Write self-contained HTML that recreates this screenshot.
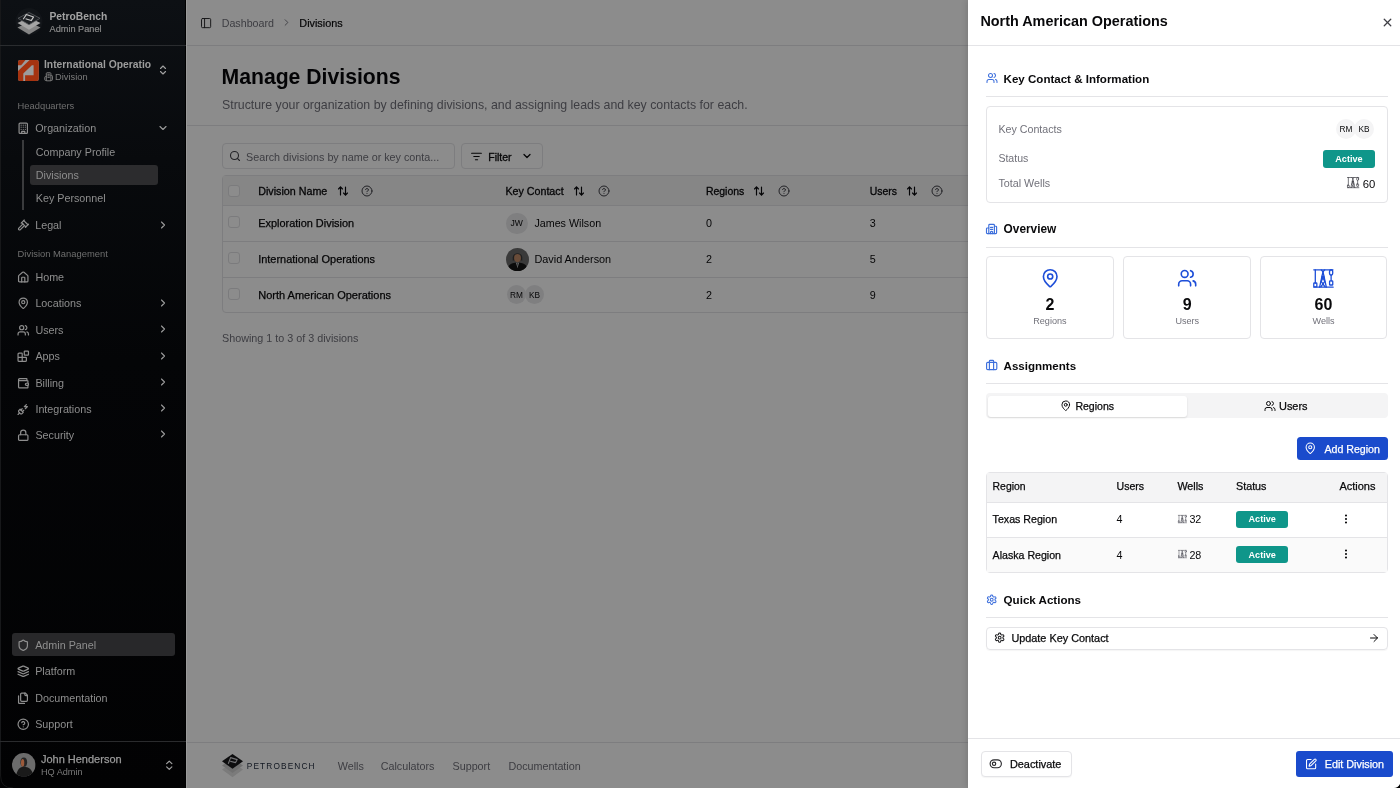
<!DOCTYPE html>
<html><head><meta charset="utf-8"><style>
html,body{margin:0;padding:0;width:1400px;height:788px;overflow:hidden;background:#fff}
body{position:relative;font-family:"Liberation Sans",sans-serif}
.t{position:absolute;white-space:nowrap;line-height:1;font-family:"Liberation Sans",sans-serif}
.av{position:absolute;border-radius:50%;background:#e8e8ea;color:#09090b;display:flex;align-items:center;justify-content:center;font-family:"Liberation Sans",sans-serif}
.badge{position:absolute;background:#0f968a;color:#fff;border-radius:3px;font-size:9.1px;font-weight:bold;display:flex;align-items:center;justify-content:center;font-family:"Liberation Sans",sans-serif}
svg{overflow:visible}
</style></head><body>
<div id="root" style="position:absolute;left:0;top:0;width:1400px;height:788px;will-change:transform"><div style="position:absolute;left:0;top:0;width:186px;height:788px;background:linear-gradient(#0d1014 0px,#080a0d 160px,#040507 360px,#020203 788px)"></div>
<div style="position:absolute;left:186px;top:0px;width:1px;height:788px;background:#9a9a9a"></div>
<div style="position:absolute;left:0px;top:0px;width:1px;height:776px;background:#17181a"></div>
<svg style="position:absolute;left:0;top:770px" width="20" height="18" viewBox="0 770 20 18"><path d="M0.6 770 V776 Q0.6 788 13 788" fill="none" stroke="#151617" stroke-width="1"/></svg>
<div style="position:absolute;left:185px;top:0px;width:1px;height:788px;background:#000"></div>
<div style="position:absolute;left:0px;top:45px;width:186px;height:1px;background:#2a2c2f"></div>
<div style="position:absolute;left:0px;top:741px;width:186px;height:1px;background:#2a2b2d"></div>
<svg style="position:absolute;left:15px;top:7px" width="28" height="30" viewBox="15 7 28 30">
<circle cx="29" cy="21.5" r="13.5" fill="#121519"/>
<path d="M29 22 L40.5 27.5 L29 34.5 L17.5 27.5 Z" fill="#858585"/>
<path d="M29 17.5 L40.5 23 L29 29.8 L17.5 23 Z" fill="#a5a5a5"/>
<path d="M29 12.5 L40 18.3 L29 24.8 L18 18.3 Z" fill="#1c1f23" stroke="#5a5d61" stroke-width="0.8"/>
<path d="M23.2 19.3 L26.3 14.6 L33.6 16.9 L31.2 20.6 L25.6 18.8" fill="none" stroke="#c9c9c9" stroke-width="1.1" stroke-linejoin="round"/>
</svg>
<div class="t" style="left:49.50px;top:12.00px;font-size:10.3px;color:#a2a2a2;font-weight:bold;">PetroBench</div>
<div class="t" style="left:49.50px;top:25.00px;font-size:9.2px;color:#8a8a8a;-webkit-text-stroke:0.2px #8a8a8a;">Admin Panel</div>
<svg style="position:absolute;left:17.5px;top:59.5px" width="20.8" height="21" viewBox="0 0 20.8 21">
<rect x="0" y="0" width="20.8" height="21" rx="2.2" fill="#9c9c9c"/>
<path d="M2 0 H7.5 L3.2 5.3 H0 V2 Q0 0 2 0Z" fill="#a53310"/>
<path d="M11.6 0 H18.6 Q20.8 0 20.8 2.2 V18.8 Q20.8 21 18.6 21 H2 Q0 21 0 19 V11 Z" fill="#a53310"/>
<path d="M13.9 5.3 H15.6 V15.3 H7.1 V21 H5.3 V13.5 Z" fill="#9c9c9c"/>
</svg>
<div class="t" style="left:44.00px;top:60.00px;font-size:10.32px;color:#9c9c9c;font-weight:bold;">International Operatio</div>
<svg style="position:absolute;left:43.8px;top:72.3px;" width="9.2" height="9.2" viewBox="0 0 24 24" fill="none" stroke="#7a7a7a" stroke-width="2.6" stroke-linecap="round" stroke-linejoin="round"><path d="M6 22V4a2 2 0 0 1 2-2h8a2 2 0 0 1 2 2v18Z"/><path d="M6 12H4a2 2 0 0 0-2 2v6a2 2 0 0 0 2 2h2"/><path d="M18 9h2a2 2 0 0 1 2 2v9a2 2 0 0 1-2 2h-2"/><path d="M10 6h4"/><path d="M10 10h4"/><path d="M10 14h4"/></svg>
<div class="t" style="left:55.00px;top:73.00px;font-size:9.3px;color:#7d7d7d;">Division</div>
<svg style="position:absolute;left:157px;top:64px;" width="12" height="12" viewBox="0 0 24 24" fill="none" stroke="#a0a0a0" stroke-width="2.3" stroke-linecap="round" stroke-linejoin="round"><path d="m7 15 5 5 5-5"/><path d="m7 9 5-5 5 5"/></svg>
<div class="t" style="left:17.60px;top:102.00px;font-size:9.35px;color:#6f6f6f;">Headquarters</div>
<svg style="position:absolute;left:16.5px;top:122px;" width="12.5" height="12.5" viewBox="0 0 24 24" fill="none" stroke="#8e8e8e" stroke-width="2.3" stroke-linecap="round" stroke-linejoin="round"><rect width="16" height="20" x="4" y="2" rx="2" ry="2"/><path d="M9 22v-4h6v4"/><path d="M8 6h.01"/><path d="M16 6h.01"/><path d="M12 6h.01"/><path d="M12 10h.01"/><path d="M12 14h.01"/><path d="M16 10h.01"/><path d="M16 14h.01"/><path d="M8 10h.01"/><path d="M8 14h.01"/></svg>
<div class="t" style="left:35.20px;top:123.00px;font-size:10.76px;color:#8e8e8e;">Organization</div>
<svg style="position:absolute;left:157px;top:122px;" width="12" height="12" viewBox="0 0 24 24" fill="none" stroke="#9a9a9a" stroke-width="2.3" stroke-linecap="round" stroke-linejoin="round"><path d="m6 9 6 6 6-6"/></svg>
<div style="position:absolute;left:22px;top:140px;width:1.6px;height:70px;background:#3a3b3d"></div>
<div class="t" style="left:35.80px;top:147.00px;font-size:10.74px;color:#8e8e8e;">Company Profile</div>
<div style="position:absolute;left:30px;top:165px;width:128px;height:20px;background:#2c2c2e;border-radius:3px"></div>
<div class="t" style="left:35.80px;top:170.00px;font-size:10.74px;color:#8e8e8e;">Divisions</div>
<div class="t" style="left:35.80px;top:193.00px;font-size:10.74px;color:#8e8e8e;">Key Personnel</div>
<svg style="position:absolute;left:16.5px;top:218.5px;" width="12.5" height="12.5" viewBox="0 0 24 24" fill="none" stroke="#8e8e8e" stroke-width="2.3" stroke-linecap="round" stroke-linejoin="round"><path d="m14.5 12.5-8 8a2.119 2.119 0 1 1-3-3l8-8"/><path d="m16 16 6-6"/><path d="m8 8 6-6"/><path d="m9 7 8 8"/><path d="m21 11-8-8"/></svg>
<div class="t" style="left:35.20px;top:220.00px;font-size:10.76px;color:#8e8e8e;">Legal</div>
<svg style="position:absolute;left:157px;top:219px;" width="12" height="12" viewBox="0 0 24 24" fill="none" stroke="#9a9a9a" stroke-width="2.3" stroke-linecap="round" stroke-linejoin="round"><path d="m9 18 6-6-6-6"/></svg>
<div class="t" style="left:17.60px;top:249.00px;font-size:9.39px;color:#6f6f6f;">Division Management</div>
<svg style="position:absolute;left:16.5px;top:271.3px;" width="12.5" height="12.5" viewBox="0 0 24 24" fill="none" stroke="#8e8e8e" stroke-width="2.3" stroke-linecap="round" stroke-linejoin="round"><path d="M15 21v-8a1 1 0 0 0-1-1h-4a1 1 0 0 0-1 1v8"/><path d="M3 10a2 2 0 0 1 .709-1.528l7-5.999a2 2 0 0 1 2.582 0l7 5.999A2 2 0 0 1 21 10v9a2 2 0 0 1-2 2H5a2 2 0 0 1-2-2z"/></svg>
<div class="t" style="left:35.40px;top:272.00px;font-size:10.75px;color:#8e8e8e;">Home</div>
<svg style="position:absolute;left:16.5px;top:297.4px;" width="12.5" height="12.5" viewBox="0 0 24 24" fill="none" stroke="#8e8e8e" stroke-width="2.3" stroke-linecap="round" stroke-linejoin="round"><path d="M20 10c0 4.993-5.539 10.193-7.399 11.799a1 1 0 0 1-1.202 0C9.539 20.193 4 14.993 4 10a8 8 0 0 1 16 0"/><circle cx="12" cy="10" r="3"/></svg>
<div class="t" style="left:35.40px;top:298.00px;font-size:10.75px;color:#8e8e8e;">Locations</div>
<svg style="position:absolute;left:157px;top:296.9px;" width="12" height="12" viewBox="0 0 24 24" fill="none" stroke="#9a9a9a" stroke-width="2.3" stroke-linecap="round" stroke-linejoin="round"><path d="m9 18 6-6-6-6"/></svg>
<svg style="position:absolute;left:16.5px;top:323.8px;" width="12.5" height="12.5" viewBox="0 0 24 24" fill="none" stroke="#8e8e8e" stroke-width="2.3" stroke-linecap="round" stroke-linejoin="round"><path d="M16 21v-2a4 4 0 0 0-4-4H6a4 4 0 0 0-4 4v2"/><circle cx="9" cy="7" r="4"/><path d="M22 21v-2a4 4 0 0 0-3-3.87"/><path d="M16 3.13a4 4 0 0 1 0 7.75"/></svg>
<div class="t" style="left:35.40px;top:325.00px;font-size:10.75px;color:#8e8e8e;">Users</div>
<svg style="position:absolute;left:157px;top:323.3px;" width="12" height="12" viewBox="0 0 24 24" fill="none" stroke="#9a9a9a" stroke-width="2.3" stroke-linecap="round" stroke-linejoin="round"><path d="m9 18 6-6-6-6"/></svg>
<svg style="position:absolute;left:16.5px;top:350px;" width="12.5" height="12.5" viewBox="0 0 24 24" fill="none" stroke="#8e8e8e" stroke-width="2.3" stroke-linecap="round" stroke-linejoin="round"><path d="M10 22V7a1 1 0 0 0-1-1H4a2 2 0 0 0-2 2v12a2 2 0 0 0 2 2h12a2 2 0 0 0 2-2v-5a1 1 0 0 0-1-1H2"/><rect x="14" y="2" width="8" height="8" rx="1"/></svg>
<div class="t" style="left:35.40px;top:351.00px;font-size:10.75px;color:#8e8e8e;">Apps</div>
<svg style="position:absolute;left:157px;top:349.5px;" width="12" height="12" viewBox="0 0 24 24" fill="none" stroke="#9a9a9a" stroke-width="2.3" stroke-linecap="round" stroke-linejoin="round"><path d="m9 18 6-6-6-6"/></svg>
<svg style="position:absolute;left:16.5px;top:376.5px;" width="12.5" height="12.5" viewBox="0 0 24 24" fill="none" stroke="#8e8e8e" stroke-width="2.3" stroke-linecap="round" stroke-linejoin="round"><path d="M19 7V4a1 1 0 0 0-1-1H5a2 2 0 0 0 0 4h15a1 1 0 0 1 1 1v4h-3a2 2 0 0 0 0 4h3a1 1 0 0 0 1-1v-2a1 1 0 0 0-1-1"/><path d="M3 5v14a2 2 0 0 0 2 2h15a1 1 0 0 0 1-1v-4"/></svg>
<div class="t" style="left:35.40px;top:378.00px;font-size:10.75px;color:#8e8e8e;">Billing</div>
<svg style="position:absolute;left:157px;top:376.0px;" width="12" height="12" viewBox="0 0 24 24" fill="none" stroke="#9a9a9a" stroke-width="2.3" stroke-linecap="round" stroke-linejoin="round"><path d="m9 18 6-6-6-6"/></svg>
<svg style="position:absolute;left:16.5px;top:402.7px;" width="12.5" height="12.5" viewBox="0 0 24 24" fill="none" stroke="#8e8e8e" stroke-width="2.3" stroke-linecap="round" stroke-linejoin="round"><path d="M6.3 20.3a2.4 2.4 0 0 0 3.4 0L12 18l-6-6-2.3 2.3a2.4 2.4 0 0 0 0 3.4Z"/><path d="m2 22 3-3"/><path d="M7.5 13.5 10 11"/><path d="M10.5 16.5 13 14"/><path d="m18 3-4 4h6l-4 4"/></svg>
<div class="t" style="left:35.40px;top:404.00px;font-size:10.75px;color:#8e8e8e;">Integrations</div>
<svg style="position:absolute;left:157px;top:402.2px;" width="12" height="12" viewBox="0 0 24 24" fill="none" stroke="#9a9a9a" stroke-width="2.3" stroke-linecap="round" stroke-linejoin="round"><path d="m9 18 6-6-6-6"/></svg>
<svg style="position:absolute;left:16.5px;top:428.5px;" width="12.5" height="12.5" viewBox="0 0 24 24" fill="none" stroke="#8e8e8e" stroke-width="2.3" stroke-linecap="round" stroke-linejoin="round"><rect width="18" height="11" x="3" y="11" rx="2" ry="2"/><path d="M7 11V7a5 5 0 0 1 10 0v4"/></svg>
<div class="t" style="left:35.40px;top:430.00px;font-size:10.75px;color:#8e8e8e;">Security</div>
<svg style="position:absolute;left:157px;top:428.0px;" width="12" height="12" viewBox="0 0 24 24" fill="none" stroke="#9a9a9a" stroke-width="2.3" stroke-linecap="round" stroke-linejoin="round"><path d="m9 18 6-6-6-6"/></svg>
<div style="position:absolute;left:12px;top:633px;width:163px;height:23px;background:#28282a;border-radius:3px"></div>
<svg style="position:absolute;left:16.5px;top:638.8px;" width="12.5" height="12.5" viewBox="0 0 24 24" fill="none" stroke="#8e8e8e" stroke-width="2.3" stroke-linecap="round" stroke-linejoin="round"><path d="M20 13c0 5-3.5 7.5-7.66 8.95a1 1 0 0 1-.67-.01C7.5 20.5 4 18 4 13V6a1 1 0 0 1 1-1c2 0 4.5-1.2 6.24-2.72a1.17 1.17 0 0 1 1.52 0C14.51 3.81 17 5 19 5a1 1 0 0 1 1 1z"/></svg>
<div class="t" style="left:35.20px;top:640.00px;font-size:10.75px;color:#8e8e8e;">Admin Panel</div>
<svg style="position:absolute;left:16.5px;top:665px;" width="12.5" height="12.5" viewBox="0 0 24 24" fill="none" stroke="#8e8e8e" stroke-width="2.3" stroke-linecap="round" stroke-linejoin="round"><path d="M12.83 2.18a2 2 0 0 0-1.66 0L2.6 6.08a1 1 0 0 0 0 1.83l8.58 3.91a2 2 0 0 0 1.66 0l8.58-3.9a1 1 0 0 0 0-1.83Z"/><path d="m22 17.65-9.17 4.16a2 2 0 0 1-1.66 0L2 17.65"/><path d="m22 12.65-9.17 4.16a2 2 0 0 1-1.66 0L2 12.65"/></svg>
<div class="t" style="left:35.20px;top:666.00px;font-size:10.75px;color:#8e8e8e;">Platform</div>
<svg style="position:absolute;left:16.5px;top:691.5px;" width="12.5" height="12.5" viewBox="0 0 24 24" fill="none" stroke="#8e8e8e" stroke-width="2.3" stroke-linecap="round" stroke-linejoin="round"><path d="M20 7h-3a2 2 0 0 1-2-2V2"/><path d="M9 18a2 2 0 0 1-2-2V4a2 2 0 0 1 2-2h7l4 4v10a2 2 0 0 1-2 2Z"/><path d="M3 7.6v12.8A1.6 1.6 0 0 0 4.6 22h9.8"/></svg>
<div class="t" style="left:35.20px;top:693.00px;font-size:10.75px;color:#8e8e8e;">Documentation</div>
<svg style="position:absolute;left:16.5px;top:717.7px;" width="12.5" height="12.5" viewBox="0 0 24 24" fill="none" stroke="#8e8e8e" stroke-width="2.3" stroke-linecap="round" stroke-linejoin="round"><circle cx="12" cy="12" r="10"/><path d="M9.09 9a3 3 0 0 1 5.83 1c0 2-3 3-3 3"/><path d="M12 17h.01"/></svg>
<div class="t" style="left:35.20px;top:719.00px;font-size:10.75px;color:#8e8e8e;">Support</div>
<svg style="position:absolute;left:11.8px;top:753px" width="23.6" height="23.6" viewBox="0 0 24 24">
<defs><clipPath id="cu"><circle cx="12" cy="12" r="12"/></clipPath></defs>
<g clip-path="url(#cu)"><rect width="24" height="24" fill="#6c6c6c"/>
<ellipse cx="12" cy="9.3" rx="3.4" ry="4.8" fill="#262626"/><ellipse cx="10.8" cy="10" rx="1.7" ry="3.9" fill="#9c5a3a"/>
<path d="M4 24 C5 17 8 14 12 14 C17 14 21 17 22 24Z" fill="#1a1a1a"/></g></svg>
<div class="t" style="left:40.90px;top:754.00px;font-size:11.0px;color:#9a9a9a;-webkit-text-stroke:0.25px #9a9a9a;">John Henderson</div>
<div class="t" style="left:40.90px;top:768.00px;font-size:9.17px;color:#7a7a7a;">HQ Admin</div>
<svg style="position:absolute;left:163px;top:758.8px;" width="12.5" height="12.5" viewBox="0 0 24 24" fill="none" stroke="#a0a0a0" stroke-width="2.3" stroke-linecap="round" stroke-linejoin="round"><path d="m7 15 5 5 5-5"/><path d="m7 9 5-5 5 5"/></svg>
<div style="position:absolute;left:187px;top:0;width:781px;height:788px;background:#fff;overflow:hidden">
<div style="position:absolute;left:-187px;top:0;width:1400px;height:788px">
<div style="position:absolute;left:187px;top:45px;width:781px;height:1px;background:#e4e4e7"></div>
<svg style="position:absolute;left:199.6px;top:16.8px;" width="12.2" height="12.2" viewBox="0 0 24 24" fill="none" stroke="#27272a" stroke-width="1.9" stroke-linecap="round" stroke-linejoin="round"><rect width="18" height="18" x="3" y="3" rx="2"/><path d="M9 3v18"/></svg>
<div class="t" style="left:221.70px;top:18.00px;font-size:10.69px;color:#71717a;">Dashboard</div>
<svg style="position:absolute;left:281px;top:17px;" width="11" height="11" viewBox="0 0 24 24" fill="none" stroke="#71717a" stroke-width="2" stroke-linecap="round" stroke-linejoin="round"><path d="m9 18 6-6-6-6"/></svg>
<div class="t" style="left:299.30px;top:18.00px;font-size:10.85px;color:#09090b;-webkit-text-stroke:0.2px #09090b;">Divisions</div>
<div class="t" style="left:221.50px;top:66.00px;font-size:21.2px;color:#09090b;font-weight:bold;">Manage Divisions</div>
<div class="t" style="left:222.00px;top:99.00px;font-size:12.35px;color:#71717a;">Structure your organization by defining divisions, and assigning leads and key contacts for each.</div>
<div style="position:absolute;left:187px;top:125px;width:781px;height:1px;background:#e4e4e7"></div>
<div style="position:absolute;left:222px;top:143px;width:233px;height:26px;box-sizing:border-box;border:1px solid #e4e4e7;border-radius:4px;background:#fff"></div>
<svg style="position:absolute;left:228.6px;top:150.3px;" width="12" height="12" viewBox="0 0 24 24" fill="none" stroke="#3f3f46" stroke-width="2.2" stroke-linecap="round" stroke-linejoin="round"><circle cx="11" cy="11" r="8"/><path d="m21 21-4.3-4.3"/></svg>
<div class="t" style="left:246.00px;top:152.00px;font-size:10.78px;color:#71717a;">Search divisions by name or key conta...</div>
<div style="position:absolute;left:461px;top:143px;width:81.5px;height:26px;box-sizing:border-box;border:1px solid #e4e4e7;border-radius:4px;background:#fff"></div>
<svg style="position:absolute;left:469.5px;top:149.5px;" width="13" height="13" viewBox="0 0 24 24" fill="none" stroke="#09090b" stroke-width="2" stroke-linecap="round" stroke-linejoin="round"><path d="M3 6h18"/><path d="M7 12h10"/><path d="M10 18h4"/></svg>
<div class="t" style="left:488.20px;top:152.00px;font-size:10.55px;color:#09090b;-webkit-text-stroke:0.3px #09090b;">Filter</div>
<svg style="position:absolute;left:521.2px;top:150.3px;" width="12" height="12" viewBox="0 0 24 24" fill="none" stroke="#09090b" stroke-width="2.5" stroke-linecap="round" stroke-linejoin="round"><path d="m6 9 6 6 6-6"/></svg>
<div style="position:absolute;left:222px;top:175px;width:760px;height:138px;box-sizing:border-box;border:1px solid #e4e4e7;border-radius:4px;background:#fff"></div>
<div style="position:absolute;left:223px;top:176px;width:758px;height:29px;background:#f4f4f5"></div>
<div style="position:absolute;left:222px;top:205px;width:760px;height:1px;background:#e4e4e7"></div>
<div style="position:absolute;left:222px;top:241px;width:760px;height:1px;background:#e4e4e7"></div>
<div style="position:absolute;left:222px;top:277px;width:760px;height:1px;background:#e4e4e7"></div>
<div style="position:absolute;left:228.3px;top:185px;width:11.3px;height:11.5px;box-sizing:border-box;border:1px solid #e0e0e3;border-radius:3px;background:#fff"></div>
<div style="position:absolute;left:228.3px;top:216.4px;width:11.3px;height:11.5px;box-sizing:border-box;border:1px solid #e0e0e3;border-radius:3px;background:#fff"></div>
<div style="position:absolute;left:228.3px;top:252.2px;width:11.3px;height:11.5px;box-sizing:border-box;border:1px solid #e0e0e3;border-radius:3px;background:#fff"></div>
<div style="position:absolute;left:228.3px;top:288.2px;width:11.3px;height:11.5px;box-sizing:border-box;border:1px solid #e0e0e3;border-radius:3px;background:#fff"></div>
<div class="t" style="left:258.20px;top:186.00px;font-size:10.73px;color:#09090b;-webkit-text-stroke:0.3px #09090b;">Division Name</div>
<svg style="position:absolute;left:336.5px;top:184.5px;" width="12" height="12" viewBox="0 0 24 24" fill="none" stroke="#09090b" stroke-width="2.3" stroke-linecap="round" stroke-linejoin="round"><path d="m21 16-4 4-4-4"/><path d="M17 20V4"/><path d="m3 8 4-4 4 4"/><path d="M7 4v16"/></svg>
<svg style="position:absolute;left:361px;top:184.5px;" width="12" height="12" viewBox="0 0 24 24" fill="none" stroke="#3f3f46" stroke-width="2" stroke-linecap="round" stroke-linejoin="round"><circle cx="12" cy="12" r="10"/><path d="M9.09 9a3 3 0 0 1 5.83 1c0 2-3 3-3 3"/><path d="M12 17h.01"/></svg>
<div class="t" style="left:505.40px;top:186.00px;font-size:10.7px;color:#09090b;-webkit-text-stroke:0.3px #09090b;">Key Contact</div>
<svg style="position:absolute;left:573px;top:184.5px;" width="12" height="12" viewBox="0 0 24 24" fill="none" stroke="#09090b" stroke-width="2.3" stroke-linecap="round" stroke-linejoin="round"><path d="m21 16-4 4-4-4"/><path d="M17 20V4"/><path d="m3 8 4-4 4 4"/><path d="M7 4v16"/></svg>
<svg style="position:absolute;left:597.5px;top:184.5px;" width="12" height="12" viewBox="0 0 24 24" fill="none" stroke="#3f3f46" stroke-width="2" stroke-linecap="round" stroke-linejoin="round"><circle cx="12" cy="12" r="10"/><path d="M9.09 9a3 3 0 0 1 5.83 1c0 2-3 3-3 3"/><path d="M12 17h.01"/></svg>
<div class="t" style="left:705.90px;top:187.00px;font-size:10.47px;color:#09090b;-webkit-text-stroke:0.3px #09090b;">Regions</div>
<svg style="position:absolute;left:753px;top:184.5px;" width="12" height="12" viewBox="0 0 24 24" fill="none" stroke="#09090b" stroke-width="2.3" stroke-linecap="round" stroke-linejoin="round"><path d="m21 16-4 4-4-4"/><path d="M17 20V4"/><path d="m3 8 4-4 4 4"/><path d="M7 4v16"/></svg>
<svg style="position:absolute;left:777.5px;top:184.5px;" width="12" height="12" viewBox="0 0 24 24" fill="none" stroke="#3f3f46" stroke-width="2" stroke-linecap="round" stroke-linejoin="round"><circle cx="12" cy="12" r="10"/><path d="M9.09 9a3 3 0 0 1 5.83 1c0 2-3 3-3 3"/><path d="M12 17h.01"/></svg>
<div class="t" style="left:869.70px;top:187.00px;font-size:10.45px;color:#09090b;-webkit-text-stroke:0.3px #09090b;">Users</div>
<svg style="position:absolute;left:906px;top:184.5px;" width="12" height="12" viewBox="0 0 24 24" fill="none" stroke="#09090b" stroke-width="2.3" stroke-linecap="round" stroke-linejoin="round"><path d="m21 16-4 4-4-4"/><path d="M17 20V4"/><path d="m3 8 4-4 4 4"/><path d="M7 4v16"/></svg>
<svg style="position:absolute;left:930.5px;top:184.5px;" width="12" height="12" viewBox="0 0 24 24" fill="none" stroke="#3f3f46" stroke-width="2" stroke-linecap="round" stroke-linejoin="round"><circle cx="12" cy="12" r="10"/><path d="M9.09 9a3 3 0 0 1 5.83 1c0 2-3 3-3 3"/><path d="M12 17h.01"/></svg>
<div class="t" style="left:258.20px;top:218.00px;font-size:10.93px;color:#09090b;-webkit-text-stroke:0.25px #09090b;">Exploration Division</div>
<div class="t" style="left:705.90px;top:218.00px;font-size:10.75px;color:#09090b;">0</div>
<div class="t" style="left:869.70px;top:218.00px;font-size:10.75px;color:#09090b;">3</div>
<div class="t" style="left:258.20px;top:254.00px;font-size:10.96px;color:#09090b;-webkit-text-stroke:0.25px #09090b;">International Operations</div>
<div class="t" style="left:705.90px;top:254.00px;font-size:10.75px;color:#09090b;">2</div>
<div class="t" style="left:869.70px;top:254.00px;font-size:10.75px;color:#09090b;">5</div>
<div class="t" style="left:258.20px;top:290.00px;font-size:11.03px;color:#09090b;-webkit-text-stroke:0.25px #09090b;">North American Operations</div>
<div class="t" style="left:705.90px;top:290.00px;font-size:10.75px;color:#09090b;">2</div>
<div class="t" style="left:869.70px;top:290.00px;font-size:10.75px;color:#09090b;">9</div>
<div class="av" style="left:506px;top:212.5px;width:21.5px;height:21.5px;font-size:8.6px">JW</div>
<div class="t" style="left:534.40px;top:218.00px;font-size:10.73px;color:#09090b;">James Wilson</div>
<svg style="position:absolute;left:505.5px;top:247.5px" width="23" height="23" viewBox="0 0 24 24">
<defs><clipPath id="cd"><circle cx="12" cy="12" r="12"/></clipPath></defs>
<g clip-path="url(#cd)"><rect width="24" height="24" fill="#6a6a6a"/>
<path d="M7 10 C7 4 17 4 17 10 L17 13 L7 13Z" fill="#3a3a3a"/>
<ellipse cx="12" cy="10.5" rx="3.6" ry="4.3" fill="#c08a68"/>
<path d="M1 24 C2 17 6 15.5 12 15.5 C18 15.5 22 17 23 24Z" fill="#151515"/>
<path d="M10.5 15.5 L12 21 L13.5 15.5Z" fill="#ddd"/><path d="M11.5 16 L12 20 L12.5 16Z" fill="#333"/></g></svg>
<div class="t" style="left:534.40px;top:254.00px;font-size:10.88px;color:#09090b;">David Anderson</div>
<div class="av" style="left:507px;top:285px;width:19px;height:19px;font-size:8.3px">RM</div>
<div class="av" style="left:525px;top:285px;width:19px;height:19px;font-size:8.3px">KB</div>
<div class="t" style="left:222.00px;top:333.00px;font-size:10.78px;color:#71717a;">Showing 1 to 3 of 3 divisions</div>
<div style="position:absolute;left:187px;top:742px;width:781px;height:1px;background:#e4e4e7"></div>
<svg style="position:absolute;left:215px;top:748px" width="40" height="34" viewBox="215 748 40 34">
<path d="M222 769.5 L232.5 762.5 L243 769.5 L232.5 777.2 Z" fill="#e0e0e0"/>
<path d="M222 765.5 L232.5 758.5 L243 765.5 L232.5 773 Z" fill="#cdcdcd"/>
<path d="M222 761.3 L232.5 753.9 L243 761.3 L232.5 768.8 Z" fill="#18181b"/>
<path d="M228.3 763.8 L230.6 757.6 L237.2 759.6 L235.6 762.6 L230.2 761.2" fill="none" stroke="#d4d4d8" stroke-width="1.1" stroke-linejoin="round"/>
</svg>
<div class="t" style="left:246.80px;top:762.00px;font-size:8.3px;color:#1e293b;letter-spacing:1.12px;">PETROBENCH</div>
<div class="t" style="left:337.80px;top:761.00px;font-size:10.75px;color:#71717a;">Wells</div>
<div class="t" style="left:380.70px;top:761.00px;font-size:10.75px;color:#71717a;">Calculators</div>
<div class="t" style="left:452.50px;top:761.00px;font-size:10.75px;color:#71717a;">Support</div>
<div class="t" style="left:508.40px;top:761.00px;font-size:10.75px;color:#71717a;">Documentation</div>
</div></div>
<div style="position:absolute;left:187px;top:0px;width:781px;height:788px;background:rgba(0,0,0,0.45)"></div>
<div style="position:absolute;left:187px;top:0px;width:781px;height:788px;background:transparent"></div>
<div style="position:absolute;left:968px;top:0px;width:432px;height:788px;background:#fff;box-shadow:-1px 0 6px rgba(0,0,0,0.14)"></div>
<div class="t" style="left:980.40px;top:14.00px;font-size:14.4px;color:#09090b;font-weight:bold;">North American Operations</div>
<svg style="position:absolute;left:1381px;top:16.4px;" width="13" height="13" viewBox="0 0 24 24" fill="none" stroke="#3f3f46" stroke-width="2.4" stroke-linecap="round" stroke-linejoin="round"><path d="M18 6 6 18"/><path d="m6 6 12 12"/></svg>
<div style="position:absolute;left:968px;top:45px;width:432px;height:1px;background:#e4e4e7"></div>
<svg style="position:absolute;left:985.6px;top:71.89999999999999px;" width="12" height="12" viewBox="0 0 24 24" fill="none" stroke="#3d6fdc" stroke-width="2.1" stroke-linecap="round" stroke-linejoin="round"><path d="M16 21v-2a4 4 0 0 0-4-4H6a4 4 0 0 0-4 4v2"/><circle cx="9" cy="7" r="4"/><path d="M22 21v-2a4 4 0 0 0-3-3.87"/><path d="M16 3.13a4 4 0 0 1 0 7.75"/></svg>
<div class="t" style="left:1003.60px;top:74.00px;font-size:11.55px;color:#09090b;font-weight:bold;">Key Contact &amp; Information</div>
<div style="position:absolute;left:986px;top:96px;width:401.5px;height:1px;background:#e4e4e7"></div>
<div style="position:absolute;left:986px;top:106px;width:401.5px;height:97px;box-sizing:border-box;border:1px solid #e4e4e7;border-radius:4px"></div>
<div class="t" style="left:998.40px;top:124.00px;font-size:10.68px;color:#71717a;">Key Contacts</div>
<div class="t" style="left:998.40px;top:153.00px;font-size:10.55px;color:#71717a;">Status</div>
<div class="t" style="left:998.40px;top:178.00px;font-size:10.75px;color:#71717a;">Total Wells</div>
<div class="av" style="left:1336px;top:119px;width:20px;height:20px;font-size:8.3px;background:#f4f4f5">RM</div>
<div class="av" style="left:1354px;top:119px;width:20px;height:20px;font-size:8.3px;background:#f4f4f5">KB</div>
<div class="badge" style="left:1322.7px;top:150px;width:52.5px;height:17.5px;">Active</div>
<svg style="position:absolute;left:1347px;top:177.2px" width="12.40" height="11.27" viewBox="0 0 22 20" fill="none" stroke="#3f3f46" stroke-width="1.25" stroke-linecap="round" stroke-linejoin="round"><path d="M0.8 0.9H20.8"/><path d="M2.4 0.9V14.6"/><rect x="0.8" y="14.6" width="3.2" height="4" rx="0.6"/><path d="M0.8 19H21"/><ellipse cx="18.9" cy="3.6" rx="1.7" ry="2.8"/><path d="M18.9 6.4V12.4"/><rect x="17.3" y="12.4" width="3.3" height="4.3" rx="0.6"/><path d="M8.6 0.9 10.4 2.8 12.2 0.9"/><path d="M10.4 2.8 6.9 18.8"/><path d="M10.4 2.8 13.9 18.8"/><path d="M9.2 8.5h2.4"/><path d="M8.5 12.8 12.6 18.6"/><path d="M12.3 12.8 8.2 18.6"/><path d="M9.6 7.5 11.9 12.3"/><path d="M11.2 7.5 8.9 12.3"/></svg>
<div class="t" style="left:1362.70px;top:179.00px;font-size:11.3px;color:#09090b;">60</div>
<svg style="position:absolute;left:982px;top:220px" width="20" height="18" viewBox="982 220 20 18" fill="none" stroke="#3d6fdc" stroke-width="1.15" stroke-linecap="round" stroke-linejoin="round"><path d="M988.8 233.6V225.3Q988.8 224.4 989.7 224.4H993.5Q994.4 224.4 994.4 225.3V233.6"/><path d="M988.8 228H987.3Q986.5 228 986.5 228.8V232.8Q986.5 233.6 987.3 233.6H995.9Q996.6 233.6 996.6 232.8V227Q996.6 226.2 995.9 226.2H994.4"/><path d="M990.5 227.4H992.7"/><path d="M990.5 229.4H992.7"/><path d="M990.5 233.6V232Q991.6 230.8 992.7 232V233.6"/></svg>
<div class="t" style="left:1003.60px;top:224.00px;font-size:11.85px;color:#09090b;font-weight:bold;">Overview</div>
<div style="position:absolute;left:986px;top:247px;width:401.5px;height:1px;background:#e4e4e7"></div>
<div style="position:absolute;left:986px;top:255.8px;width:127.8px;height:83.6px;box-sizing:border-box;border:1px solid #e4e4e7;border-radius:4px"></div>
<svg style="position:absolute;left:1039.7px;top:268px;" width="20.4" height="20.4" viewBox="0 0 24 24" fill="none" stroke="#1d4ed8" stroke-width="1.9" stroke-linecap="round" stroke-linejoin="round"><path d="M20 10c0 4.993-5.539 10.193-7.399 11.799a1 1 0 0 1-1.202 0C9.539 20.193 4 14.993 4 10a8 8 0 0 1 16 0"/><circle cx="12" cy="10" r="3"/></svg>
<div class="t" style="left:1049.90px;top:297.00px;font-size:16px;color:#09090b;font-weight:bold;transform:translateX(-50%);">2</div>
<div class="t" style="left:1049.90px;top:317.00px;font-size:9.1px;color:#71717a;transform:translateX(-50%);">Regions</div>
<div style="position:absolute;left:1123.4px;top:255.8px;width:127.8px;height:83.6px;box-sizing:border-box;border:1px solid #e4e4e7;border-radius:4px"></div>
<svg style="position:absolute;left:1177.1000000000001px;top:268px;" width="20.4" height="20.4" viewBox="0 0 24 24" fill="none" stroke="#1d4ed8" stroke-width="1.9" stroke-linecap="round" stroke-linejoin="round"><path d="M16 21v-2a4 4 0 0 0-4-4H6a4 4 0 0 0-4 4v2"/><circle cx="9" cy="7" r="4"/><path d="M22 21v-2a4 4 0 0 0-3-3.87"/><path d="M16 3.13a4 4 0 0 1 0 7.75"/></svg>
<div class="t" style="left:1187.30px;top:297.00px;font-size:16px;color:#09090b;font-weight:bold;transform:translateX(-50%);">9</div>
<div class="t" style="left:1187.30px;top:317.00px;font-size:9.1px;color:#71717a;transform:translateX(-50%);">Users</div>
<div style="position:absolute;left:1259.6px;top:255.8px;width:127.8px;height:83.6px;box-sizing:border-box;border:1px solid #e4e4e7;border-radius:4px"></div>
<svg style="position:absolute;left:1312.9px;top:268.9px" width="21.10" height="19.18" viewBox="0 0 22 20" fill="none" stroke="#1d4ed8" stroke-width="1.35" stroke-linecap="round" stroke-linejoin="round"><path d="M0.8 0.9H20.8"/><path d="M2.4 0.9V14.6"/><rect x="0.8" y="14.6" width="3.2" height="4" rx="0.6"/><path d="M0.8 19H21"/><ellipse cx="18.9" cy="3.6" rx="1.7" ry="2.8"/><path d="M18.9 6.4V12.4"/><rect x="17.3" y="12.4" width="3.3" height="4.3" rx="0.6"/><path d="M8.6 0.9 10.4 2.8 12.2 0.9"/><path d="M10.4 2.8 6.9 18.8"/><path d="M10.4 2.8 13.9 18.8"/><path d="M9.2 8.5h2.4"/><path d="M8.5 12.8 12.6 18.6"/><path d="M12.3 12.8 8.2 18.6"/><path d="M9.6 7.5 11.9 12.3"/><path d="M11.2 7.5 8.9 12.3"/></svg>
<div class="t" style="left:1323.50px;top:297.00px;font-size:16px;color:#09090b;font-weight:bold;transform:translateX(-50%);">60</div>
<div class="t" style="left:1323.50px;top:317.00px;font-size:9.1px;color:#71717a;transform:translateX(-50%);">Wells</div>
<svg style="position:absolute;left:982px;top:356px" width="20" height="18" viewBox="982 356 20 18" fill="none" stroke="#3d6fdc" stroke-width="1.15" stroke-linecap="round" stroke-linejoin="round"><rect x="986.6" y="362.4" width="10.2" height="7.2" rx="1.2"/><path d="M989.4 369.6V361.2Q989.4 360.4 990.2 360.4H992.8Q993.6 360.4 993.6 361.2V369.6"/></svg>
<div class="t" style="left:1003.60px;top:361.00px;font-size:11.56px;color:#09090b;font-weight:bold;">Assignments</div>
<div style="position:absolute;left:986px;top:383px;width:401.5px;height:1px;background:#e4e4e7"></div>
<div style="position:absolute;left:986px;top:393px;width:401.5px;height:25px;background:#f4f4f5;border-radius:4px"></div>
<div style="position:absolute;left:988px;top:395.5px;width:199px;height:21px;background:#fff;border-radius:3px;box-shadow:0 1px 2px rgba(0,0,0,0.12)"></div>
<svg style="position:absolute;left:1060px;top:400px;" width="11.5" height="11.5" viewBox="0 0 24 24" fill="none" stroke="#09090b" stroke-width="2" stroke-linecap="round" stroke-linejoin="round"><path d="M20 10c0 4.993-5.539 10.193-7.399 11.799a1 1 0 0 1-1.202 0C9.539 20.193 4 14.993 4 10a8 8 0 0 1 16 0"/><circle cx="12" cy="10" r="3"/></svg>
<div class="t" style="left:1075.40px;top:401.00px;font-size:10.55px;color:#09090b;-webkit-text-stroke:0.25px #09090b;">Regions</div>
<svg style="position:absolute;left:1263.5px;top:400px;" width="12" height="12" viewBox="0 0 24 24" fill="none" stroke="#09090b" stroke-width="2" stroke-linecap="round" stroke-linejoin="round"><path d="M16 21v-2a4 4 0 0 0-4-4H6a4 4 0 0 0-4 4v2"/><circle cx="9" cy="7" r="4"/><path d="M22 21v-2a4 4 0 0 0-3-3.87"/><path d="M16 3.13a4 4 0 0 1 0 7.75"/></svg>
<div class="t" style="left:1279.00px;top:401.00px;font-size:10.95px;color:#09090b;-webkit-text-stroke:0.25px #09090b;">Users</div>
<div style="position:absolute;left:1296.5px;top:436.5px;width:91px;height:23px;background:#1a4bcc;border-radius:3.5px"></div>
<svg style="position:absolute;left:1303.5px;top:441.5px;" width="12.5" height="12.5" viewBox="0 0 24 24" fill="none" stroke="#fff" stroke-width="2" stroke-linecap="round" stroke-linejoin="round"><path d="M20 10c0 4.993-5.539 10.193-7.399 11.799a1 1 0 0 1-1.202 0C9.539 20.193 4 14.993 4 10a8 8 0 0 1 16 0"/><circle cx="12" cy="10" r="3"/></svg>
<div class="t" style="left:1324.40px;top:444.00px;font-size:10.64px;color:#fff;-webkit-text-stroke:0.25px #fff;">Add Region</div>
<div style="position:absolute;left:986px;top:471.5px;width:401.5px;height:101px;box-sizing:border-box;border:1px solid #e4e4e7;border-radius:4px;overflow:hidden"></div>
<div style="position:absolute;left:987px;top:472.5px;width:399.5px;height:29px;background:#f4f4f5"></div>
<div style="position:absolute;left:987px;top:501.5px;width:399.5px;height:1px;background:#e4e4e7"></div>
<div style="position:absolute;left:987px;top:537px;width:399.5px;height:1px;background:#e4e4e7"></div>
<div style="position:absolute;left:987px;top:538px;width:399.5px;height:34px;background:#fafafa"></div>
<div class="t" style="left:992.60px;top:482.00px;font-size:10.41px;color:#09090b;-webkit-text-stroke:0.25px #09090b;">Region</div>
<div class="t" style="left:1116.50px;top:481.00px;font-size:10.57px;color:#09090b;-webkit-text-stroke:0.25px #09090b;">Users</div>
<div class="t" style="left:1177.40px;top:481.00px;font-size:10.76px;color:#09090b;-webkit-text-stroke:0.25px #09090b;">Wells</div>
<div class="t" style="left:1236.00px;top:481.00px;font-size:10.76px;color:#09090b;-webkit-text-stroke:0.25px #09090b;">Status</div>
<div class="t" style="left:1339.40px;top:481.00px;font-size:11.0px;color:#09090b;-webkit-text-stroke:0.25px #09090b;">Actions</div>
<div class="t" style="left:992.60px;top:514.00px;font-size:10.65px;color:#09090b;-webkit-text-stroke:0.25px #09090b;">Texas Region</div>
<div class="t" style="left:1116.50px;top:514.00px;font-size:10.75px;color:#09090b;">4</div>
<svg style="position:absolute;left:1178.1px;top:514.7px" width="9.00" height="8.18" viewBox="0 0 22 20" fill="none" stroke="#52525b" stroke-width="1.3" stroke-linecap="round" stroke-linejoin="round"><path d="M0.8 0.9H20.8"/><path d="M2.4 0.9V14.6"/><rect x="0.8" y="14.6" width="3.2" height="4" rx="0.6"/><path d="M0.8 19H21"/><ellipse cx="18.9" cy="3.6" rx="1.7" ry="2.8"/><path d="M18.9 6.4V12.4"/><rect x="17.3" y="12.4" width="3.3" height="4.3" rx="0.6"/><path d="M8.6 0.9 10.4 2.8 12.2 0.9"/><path d="M10.4 2.8 6.9 18.8"/><path d="M10.4 2.8 13.9 18.8"/><path d="M9.2 8.5h2.4"/><path d="M8.5 12.8 12.6 18.6"/><path d="M12.3 12.8 8.2 18.6"/><path d="M9.6 7.5 11.9 12.3"/><path d="M11.2 7.5 8.9 12.3"/></svg>
<div class="t" style="left:1189.40px;top:514.00px;font-size:10.75px;color:#09090b;">32</div>
<div class="badge" style="left:1236px;top:510.5px;width:52.4px;height:17.4px;">Active</div>
<svg style="position:absolute;left:1340px;top:512.6px;" width="12" height="12" viewBox="0 0 24 24" fill="none" stroke="#09090b" stroke-width="2.2" stroke-linecap="round" stroke-linejoin="round"><circle cx="12" cy="12" r="1"/><circle cx="12" cy="5" r="1"/><circle cx="12" cy="19" r="1"/></svg>
<div class="t" style="left:992.60px;top:550.00px;font-size:10.61px;color:#09090b;-webkit-text-stroke:0.25px #09090b;">Alaska Region</div>
<div class="t" style="left:1116.50px;top:550.00px;font-size:10.75px;color:#09090b;">4</div>
<svg style="position:absolute;left:1178.1px;top:550.1px" width="9.00" height="8.18" viewBox="0 0 22 20" fill="none" stroke="#52525b" stroke-width="1.3" stroke-linecap="round" stroke-linejoin="round"><path d="M0.8 0.9H20.8"/><path d="M2.4 0.9V14.6"/><rect x="0.8" y="14.6" width="3.2" height="4" rx="0.6"/><path d="M0.8 19H21"/><ellipse cx="18.9" cy="3.6" rx="1.7" ry="2.8"/><path d="M18.9 6.4V12.4"/><rect x="17.3" y="12.4" width="3.3" height="4.3" rx="0.6"/><path d="M8.6 0.9 10.4 2.8 12.2 0.9"/><path d="M10.4 2.8 6.9 18.8"/><path d="M10.4 2.8 13.9 18.8"/><path d="M9.2 8.5h2.4"/><path d="M8.5 12.8 12.6 18.6"/><path d="M12.3 12.8 8.2 18.6"/><path d="M9.6 7.5 11.9 12.3"/><path d="M11.2 7.5 8.9 12.3"/></svg>
<div class="t" style="left:1189.40px;top:550.00px;font-size:10.75px;color:#09090b;">28</div>
<div class="badge" style="left:1236px;top:545.9px;width:52.4px;height:17.4px;">Active</div>
<svg style="position:absolute;left:1340px;top:548.0px;" width="12" height="12" viewBox="0 0 24 24" fill="none" stroke="#09090b" stroke-width="2.2" stroke-linecap="round" stroke-linejoin="round"><circle cx="12" cy="12" r="1"/><circle cx="12" cy="5" r="1"/><circle cx="12" cy="19" r="1"/></svg>
<svg style="position:absolute;left:985.9px;top:594.4px;" width="11.4" height="11.4" viewBox="0 0 24 24" fill="none" stroke="#3d6fdc" stroke-width="2.2" stroke-linecap="round" stroke-linejoin="round"><path d="M12.22 2h-.44a2 2 0 0 0-2 2v.18a2 2 0 0 1-1 1.73l-.43.25a2 2 0 0 1-2 0l-.15-.08a2 2 0 0 0-2.73.73l-.22.38a2 2 0 0 0 .73 2.73l.15.1a2 2 0 0 1 1 1.72v.51a2 2 0 0 1-1 1.74l-.15.09a2 2 0 0 0-.73 2.73l.22.38a2 2 0 0 0 2.73.73l.15-.08a2 2 0 0 1 2 0l.43.25a2 2 0 0 1 1 1.73V20a2 2 0 0 0 2 2h.44a2 2 0 0 0 2-2v-.18a2 2 0 0 1 1-1.73l.43-.25a2 2 0 0 1 2 0l.15.08a2 2 0 0 0 2.73-.73l.22-.39a2 2 0 0 0-.73-2.73l-.15-.08a2 2 0 0 1-1-1.74v-.5a2 2 0 0 1 1-1.74l.15-.09a2 2 0 0 0 .73-2.73l-.22-.38a2 2 0 0 0-2.73-.73l-.15.08a2 2 0 0 1-2 0l-.43-.25a2 2 0 0 1-1-1.73V4a2 2 0 0 0-2-2z"/><circle cx="12" cy="12" r="3"/></svg>
<div class="t" style="left:1003.60px;top:595.00px;font-size:11.59px;color:#09090b;font-weight:bold;">Quick Actions</div>
<div style="position:absolute;left:986px;top:617px;width:401.5px;height:1px;background:#e4e4e7"></div>
<div style="position:absolute;left:986px;top:626.5px;width:401.5px;height:23px;box-sizing:border-box;border:1px solid #e4e4e7;border-radius:4px;box-shadow:0 1px 1px rgba(0,0,0,0.04)"></div>
<svg style="position:absolute;left:994.2px;top:632.4px;" width="11.3" height="11.3" viewBox="0 0 24 24" fill="none" stroke="#18181b" stroke-width="2.2" stroke-linecap="round" stroke-linejoin="round"><path d="M12.22 2h-.44a2 2 0 0 0-2 2v.18a2 2 0 0 1-1 1.73l-.43.25a2 2 0 0 1-2 0l-.15-.08a2 2 0 0 0-2.73.73l-.22.38a2 2 0 0 0 .73 2.73l.15.1a2 2 0 0 1 1 1.72v.51a2 2 0 0 1-1 1.74l-.15.09a2 2 0 0 0-.73 2.73l.22.38a2 2 0 0 0 2.73.73l.15-.08a2 2 0 0 1 2 0l.43.25a2 2 0 0 1 1 1.73V20a2 2 0 0 0 2 2h.44a2 2 0 0 0 2-2v-.18a2 2 0 0 1 1-1.73l.43-.25a2 2 0 0 1 2 0l.15.08a2 2 0 0 0 2.73-.73l.22-.39a2 2 0 0 0-.73-2.73l-.15-.08a2 2 0 0 1-1-1.74v-.5a2 2 0 0 1 1-1.74l.15-.09a2 2 0 0 0 .73-2.73l-.22-.38a2 2 0 0 0-2.73-.73l-.15.08a2 2 0 0 1-2 0l-.43-.25a2 2 0 0 1-1-1.73V4a2 2 0 0 0-2-2z"/><circle cx="12" cy="12" r="3"/></svg>
<div class="t" style="left:1011.40px;top:633.00px;font-size:10.86px;color:#09090b;-webkit-text-stroke:0.25px #09090b;">Update Key Contact</div>
<svg style="position:absolute;left:1367.5px;top:632px;" width="12" height="12" viewBox="0 0 24 24" fill="none" stroke="#09090b" stroke-width="2" stroke-linecap="round" stroke-linejoin="round"><path d="M5 12h14"/><path d="m12 5 7 7-7 7"/></svg>
<div style="position:absolute;left:968px;top:738px;width:432px;height:1px;background:#e4e4e7"></div>
<div style="position:absolute;left:980.5px;top:750.5px;width:91px;height:26.5px;box-sizing:border-box;border:1px solid #e4e4e7;border-radius:4px;background:#fff;box-shadow:0 1px 1px rgba(0,0,0,0.04)"></div>
<svg style="position:absolute;left:988.6px;top:756.8px;" width="13.5" height="13.5" viewBox="0 0 24 24" fill="none" stroke="#27272a" stroke-width="2" stroke-linecap="round" stroke-linejoin="round"><rect width="20" height="14" x="2" y="5" rx="7" ry="7"/><circle cx="9" cy="12" r="3"/></svg>
<div class="t" style="left:1009.90px;top:759.00px;font-size:10.92px;color:#09090b;-webkit-text-stroke:0.25px #09090b;">Deactivate</div>
<div style="position:absolute;left:1296px;top:750.5px;width:97.3px;height:26.5px;background:#1a4bcc;border-radius:3px"></div>
<svg style="position:absolute;left:1304.5px;top:757.6px;" width="12.2" height="12.2" viewBox="0 0 24 24" fill="none" stroke="#fff" stroke-width="2.1" stroke-linecap="round" stroke-linejoin="round"><path d="M12 3H5a2 2 0 0 0-2 2v14a2 2 0 0 0 2 2h14a2 2 0 0 0 2-2v-7"/><path d="M18.375 2.625a1 1 0 0 1 3 3l-9.013 9.014a2 2 0 0 1-.853.505l-2.873.84a.5.5 0 0 1-.62-.62l.84-2.873a2 2 0 0 1 .506-.852z"/></svg>
<div class="t" style="left:1324.70px;top:759.00px;font-size:10.81px;color:#fff;-webkit-text-stroke:0.25px #fff;">Edit Division</div>
<svg style="position:absolute;left:1392px;top:780px" width="8" height="8" viewBox="0 0 8 8"><path d="M8 4 Q6 8 2 8 H8Z" fill="#000"/></svg>
</div></body></html>
